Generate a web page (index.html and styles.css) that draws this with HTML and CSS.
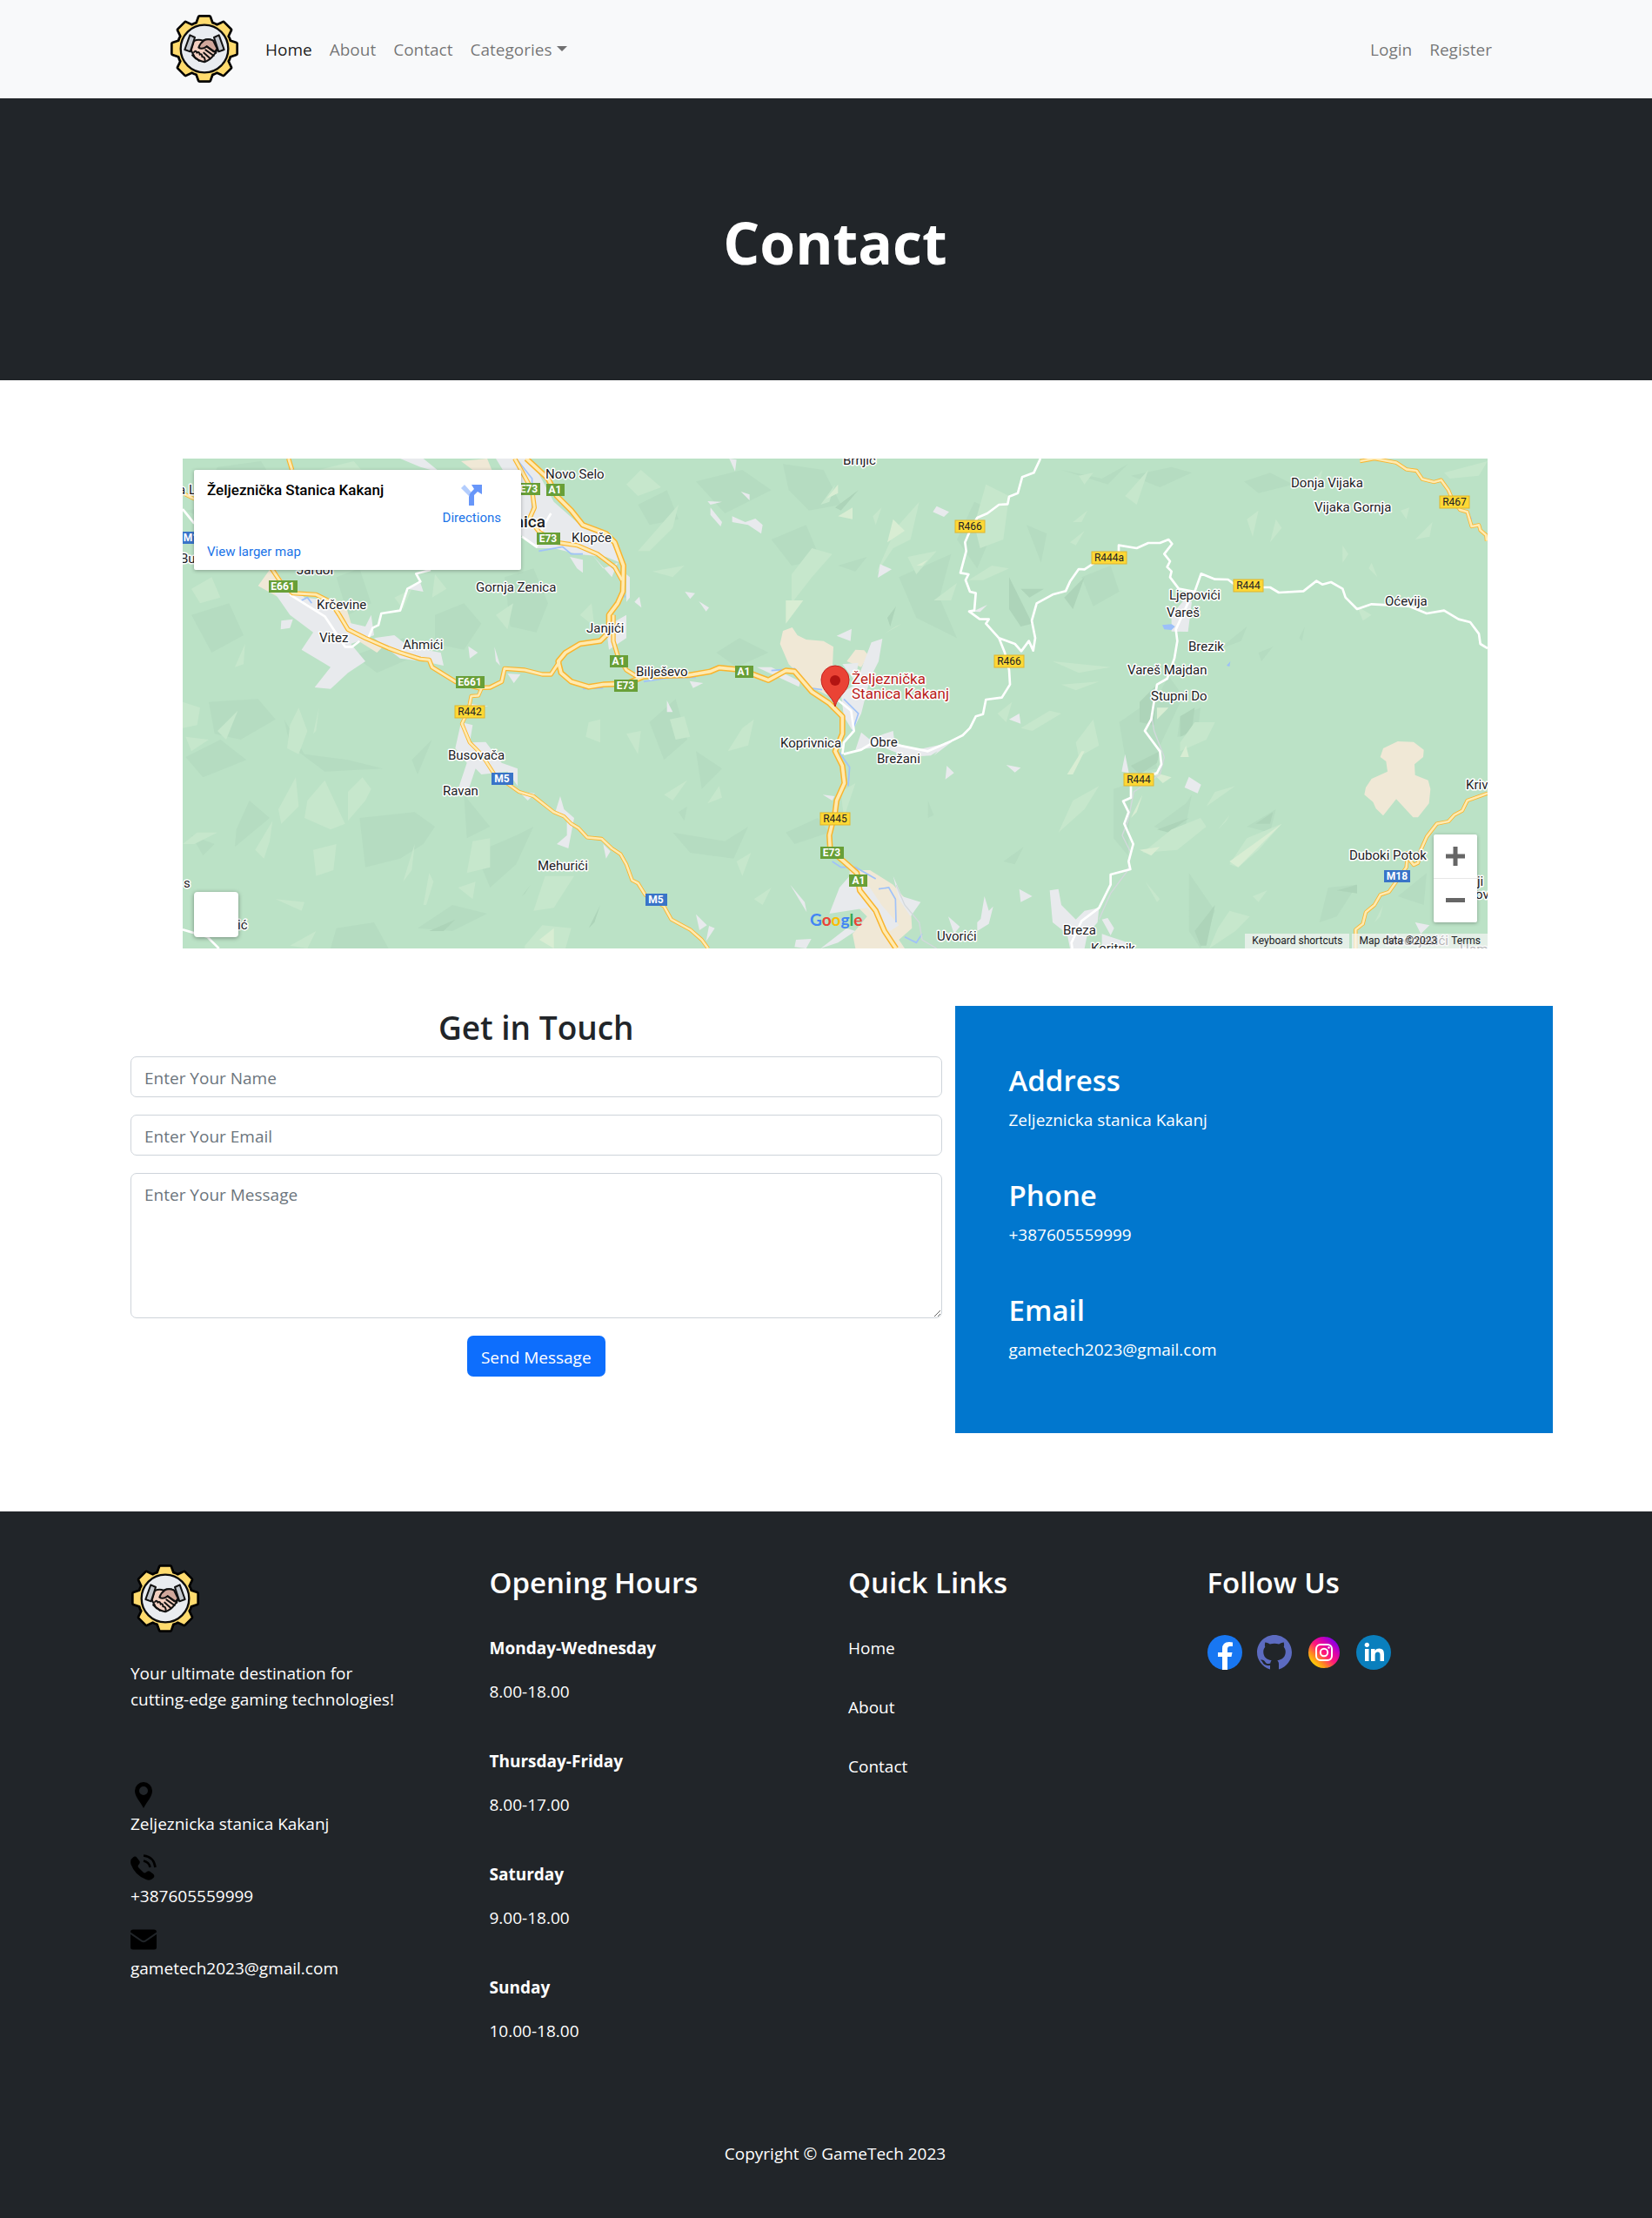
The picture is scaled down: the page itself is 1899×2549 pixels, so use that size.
FILE: index.html
```html
<!DOCTYPE html>
<html lang="en">
<head>
<meta charset="utf-8">
<meta name="viewport" content="width=device-width, initial-scale=1">
<title>GameTech - Contact</title>
<link rel="stylesheet" href="styles.css">
</head>
<body>
<svg class="defs" aria-hidden="true">
  <defs>
    <g id="gear-shape">
      <circle r="90"/>
      <path id="teeth" d="M-28-78-17-109H17L28-78ZM-28 78-17 109H17L28 78ZM-78-28-109-17V17L-78 28ZM78-28 109-17V17L78 28Z"/>
      <use href="#teeth" transform="rotate(45)"/>
    </g>
    <symbol id="logo" viewBox="-120 -120 240 240">
      <use href="#gear-shape" fill="#000" stroke="#000" stroke-width="16" stroke-linejoin="round"/>
      <use href="#gear-shape" fill="#ffdb6e"/>
      <circle r="82" fill="#e9ecf0" stroke="#0b0b0b" stroke-width="7"/>
      <g stroke="#111" stroke-width="6" stroke-linejoin="round" stroke-linecap="round">
        <path d="M-36-27Q-20-34-6-28Q12-36 30-28L44 2Q40 14 32 22Q20 38 0 46Q-24 40-34 28L-46 6Z" fill="#f3cfc0"/>
        <path d="M-2-28Q12-36 30-28L44 0Q38 10 32 10L8-8Q-8 4-20-4Q-14-20-2-28Z" fill="#d0a79b"/>
        <path d="M8-8 40 14M4 4 32 24M-2 14 20 34M-36 12Q-30 4-26 14Q-18 8-16 20Q-8 16-8 28Q2 26 2 44M-42 22-30 34M-28 34-18 42" fill="none"/>
        <path d="M-50-47-33-39-49 10-68 3Z" fill="#c3c7cd"/>
        <path d="M50-47 33-39 49 10 68 3Z" fill="#c3c7cd"/>
      </g>
    </symbol>
  </defs>
</svg>

<nav class="navbar">
  <div class="container navbar-inner">
    <a class="brand" href="#" aria-label="GameTech"><svg class="logo"><use href="#logo"/></svg></a>
    <ul class="nav-list">
      <li><a class="nav-link active" href="#">Home</a></li>
      <li><a class="nav-link" href="#">About</a></li>
      <li><a class="nav-link" href="#">Contact</a></li>
      <li><a class="nav-link dropdown" href="#">Categories</a></li>
    </ul>
    <ul class="nav-list nav-end">
      <li><a class="nav-link" href="#">Login</a></li>
      <li><a class="nav-link" href="#">Register</a></li>
    </ul>
  </div>
</nav>

<header class="hero"><h1>Contact</h1></header>

<main class="main">
  <div class="container">
    <div class="map">
      <svg class="map-canvas" viewBox="210 527 1500 563" preserveAspectRatio="xMidYMid slice" role="img" aria-label="Map of Kakanj">
        <rect x="210" y="527" width="1500" height="563" fill="#bbe2c6"/>
        <defs>
          <path id="hw" d="M1215 21 1290 90 1320 150 1370 200 1410 250 1490 280 1520 310 1550 390 1548 480 1530 520 1500 560 1500 620 1470 650 1400 660 1350 690 1325 720 1335 760 1370 790 1430 808 1480 800 1560 797 1620 772 1775 768 1850 755 1880 742 1960 750 2010 770 2050 785 2110 752 2140 755 2200 825 2260 865 2305 910 2305 970 2280 1030 2305 1080 2312 1140 2285 1200 2280 1240 2260 1320 2263 1370 2310 1410 2355 1450 2365 1510 2420 1580 2450 1650 2490 1710"/>
          <path id="hw2" d="M1515 560 1515 650 1530 700 1560 750 1600 775M1175 21 1205 75 1235 130 1243 190 1225 230 1260 275 1320 310 1390 320 1460 350 1520 395 1545 440M395 21 407 60M330 390 370 450 410 485 490 490 540 515 570 560 600 610 660 640 740 675 780 690 850 712 880 715 890 740 930 765 970 790 1050 812 1090 810 1130 790 1140 745 1210 750 1270 765 1300 765 1330 720"/>
          <path id="minor" d="M1060 815 1050 838 1025 840 1015 890 993 935 1020 1000 1060 1040 1105 1110 1190 1170 1240 1185 1310 1240 1345 1255 1370 1280 1395 1295 1425 1327 1475 1332 1510 1365 1540 1385 1560 1420 1580 1475 1600 1485 1625 1525 1690 1565 1715 1610 1780 1645 1820 1680 1842 1710M4090 30 4140 21 4215 35 4250 58 4285 63 4305 92 4345 102 4370 95 4395 130 4410 165 4435 198 4460 205 4475 255 4500 250 4505 268 4525 285 4527 305M4530 1175 4460 1200 4443 1235 4415 1250 4395 1272 4355 1280 4320 1325 4300 1370 4290 1415 4275 1422 4262 1405M4255 1375 4250 1430 4190 1515 4160 1525 4140 1560 4110 1585 4100 1625 4075 1645 4075 1710M30 140 70 160"/>
        </defs>
        <g transform="scale(.33333333)">
         <g transform="translate(600 1560)">
          <g class="shade">
            <path d="M150 50 300 30 350 110 240 150 120 110ZM40 200 240 170 310 230 180 260ZM900 560 1000 520 1060 590 1000 680 900 660ZM1140 430 1240 400 1290 520 1250 620 1160 600ZM560 430 640 400 680 520 600 560ZM800 140 960 60 1010 150 900 230ZM60 560 190 520 240 630 130 690ZM620 700 790 640 860 690 700 760Z"/>
            <path d="M120 860 290 850 350 920 230 990 140 970ZM380 920 450 1040 600 1060 720 1090 520 1100 400 1010ZM40 1050 160 990 250 1060 100 1120ZM260 1200 330 1260 210 1360 215 1300ZM640 1260 830 1240 900 1290 860 1350 780 1400 660 1430ZM820 1060 890 990 840 1110ZM1000 1180 1090 1290 1010 1330ZM1040 1380 1180 1320 1240 1290 1180 1420 1090 1500ZM560 1640 690 1620 740 1710 540 1710ZM840 1640 960 1560 1080 1590 960 1650ZM60 1320 140 1350 100 1390Z"/>
            <path d="M1600 180 1700 130 1740 230 1640 250ZM1800 100 1960 60 2060 130 1900 210ZM2100 40 2240 60 2300 180 2190 200 2120 130ZM2060 300 2180 250 2230 370 2130 390ZM2290 390 2390 360 2350 410ZM1870 690 1950 640 2050 690 1940 740ZM2500 430 2680 350 2640 500 2700 640 2560 570ZM2700 300 2760 170 2850 210 2770 400ZM1640 930 1730 850 1770 990 1690 1060ZM1800 1030 1890 1090 1820 1160ZM1720 1310 1900 1340 1980 1290 1930 1400 1780 1380ZM2110 1310 2220 1260 2260 1310 2140 1350ZM1740 1240 1770 1220 1760 1270ZM2600 1200 2620 1250 2600 1260ZM2860 1410 2930 1360 2900 1420Z"/>
            <path d="M3060 60 3200 90 3290 40 3220 110ZM3300 80 3440 50 3510 70 3400 120ZM3690 100 3780 70 3860 110 3740 140ZM3130 430 3230 390 3260 480 3170 530ZM3430 770 3480 840 3410 990 3360 1100 3330 960ZM3470 910 3540 880 3530 970 3460 980ZM3260 930 3360 860 3390 1090 3290 1110ZM3240 1160 3300 1140 3290 1390 3240 1330ZM3380 1290 3490 1210 3510 1180 3480 1330ZM3500 1450 3590 1580 3540 1710 3500 1650ZM3700 1290 3800 1230 3780 1310ZM3980 1500 4080 1490 4010 1600 3950 1620ZM4220 1530 4320 1450 4310 1560ZM3880 640 3900 600 3890 650ZM2940 250 3010 280 2990 380ZM3600 680 3700 600 3680 650ZM3740 690 3790 670 3750 720Z"/>
          </g>
          <g class="deep">
            <path d="M2880 430 2960 590 2920 600 2880 540ZM2920 470 3000 470 2950 500ZM2280 190 2360 130 2300 200ZM3070 500 3140 430 3100 540ZM3330 860 3390 800 3380 940 3330 930ZM3470 910 3520 880 3510 960 3470 980ZM3300 1080 3400 1030 3390 1070 3330 1110ZM3390 1300 3500 1260 3430 1310ZM3540 1700 3520 1650 3590 1560 3560 1700ZM880 1650 970 1610 930 1650ZM1200 1530 1230 1490 1210 1520ZM1430 1640 1470 1560 1450 1620ZM3730 1280 3790 1240 3780 1280ZM4010 1510 4080 1490 4080 1520ZM2460 570 2490 530 2470 600Z"/>
          </g>
          <g class="light">
            <path d="M110 120 210 60 250 80 160 160ZM60 470 130 430 160 500 90 520ZM210 740 245 660 240 730ZM500 60 620 30 680 100 560 120ZM1110 560 1170 520 1150 610ZM900 420 940 470 890 500ZM1400 560 1440 520 1450 600ZM760 500 820 470 790 540ZM30 860 90 880 80 940 30 950ZM40 980 120 990 60 1030ZM150 960 220 890 180 990ZM400 940 430 880 460 960 430 1040 390 1020ZM480 970 500 880 490 960ZM360 1230 420 1120 430 1220 370 1280ZM460 1200 520 1130 590 1280 540 1300 450 1260ZM600 1170 650 1120 680 1160 660 1200 600 1270ZM30 1350 80 1310 150 1310 70 1350ZM280 1370 340 1270 330 1340 310 1400ZM480 1370 560 1350 550 1440 490 1460ZM790 1480 830 1350 820 1440ZM860 1560 880 1450 895 1480 870 1560ZM1010 1450 1030 1340 1090 1330 1090 1430ZM1240 1580 1280 1460 1380 1460 1310 1570ZM1210 1700 1270 1630 1370 1640 1350 1710 1210 1710ZM350 1540 450 1550 440 1580ZM400 1700 490 1650 460 1710ZM980 1500 1040 1480 1030 1540ZM1430 930 1470 920 1470 1000 1420 980Z"/>
            <path d="M1560 110 1610 60 1680 120 1600 150ZM1600 340 1740 180 1720 260 1640 340ZM1650 410 1760 390 1720 430ZM2130 420 2200 330 2270 350 2200 430 2130 520ZM2230 180 2280 110 2260 170ZM2410 220 2440 190 2420 250ZM2420 420 2490 260 2570 170 2540 300 2480 330ZM2530 360 2630 340 2560 420ZM2620 510 2700 450 2680 510ZM2740 440 2820 390 2880 400 2790 440ZM2760 250 2800 110 2880 150 2860 300 2780 330ZM1710 920 1760 910 1780 980 1730 990ZM1560 970 1610 960 1600 1040ZM1910 1030 1960 950 2000 920 1980 1010ZM1690 1180 1770 1130 1720 1200ZM1840 1210 1880 1150 1890 1190ZM1940 1410 1990 1380 1960 1460ZM2000 1540 2060 1500 2030 1560ZM2840 900 2890 860 2870 930ZM2920 950 3020 890 3060 900 2960 960ZM2300 1170 2350 1140 2310 1260Z"/>
            <path d="M3120 80 3170 70 3140 110ZM3280 150 3360 60 3320 180ZM3100 240 3150 200 3130 240ZM3090 310 3140 270 3110 320ZM3030 720 3230 740 3120 760ZM3060 800 3190 790 3110 820ZM3110 1000 3170 920 3190 1010 3120 1050ZM3050 1310 3100 1200 3190 1150 3140 1230ZM3470 1000 3520 930 3590 930 3560 990 3470 1030ZM3340 1380 3440 1300 3540 1260 3560 1290 3460 1370ZM3640 1420 3700 1330 3820 1280 3740 1370 3670 1430ZM3560 1220 3590 1170 3660 1150ZM3600 1300 3640 1250 3630 1270ZM3600 1640 3640 1580 3710 1600 3660 1650 3570 1710ZM3350 1480 3400 1540 3390 1550ZM3780 310 3800 230 3820 260ZM3700 230 3740 200 3720 290ZM4030 320 4050 350 4030 380ZM4130 380 4150 430 4120 400ZM4280 300 4340 240 4330 290ZM4230 200 4260 190 4250 230ZM3920 110 3960 60 3950 110ZM4380 70 4530 30 4500 80 4400 90ZM4080 530 4130 560 4100 580ZM4140 1620 4170 1560 4160 1600ZM3720 1530 3770 1510 3740 1550Z"/>
          </g>
          <g class="pale">
            <path d="M2250 160 2290 110 2290 140ZM2290 220 2340 190 2340 230ZM2460 310 2480 230 2520 270ZM2110 510 2170 510 2110 590ZM2440 630 2510 590 2490 600ZM2560 390 2600 370 2580 390ZM3300 1260 3340 1180 3320 1240ZM3470 1050 3490 1010 3500 1050ZM3640 1410 3820 1280 3670 1430ZM3370 1100 3440 1120 3410 1140ZM3330 1370 3400 1360 3370 1390ZM3390 880 3430 880 3390 920ZM3080 1110 3130 1030 3140 1030 3100 1110ZM1260 1680 1310 1640 1310 1710Z"/>
          </g>
          <g class="sand">
            <path d="M290 460 340 390 400 480 490 580 520 630 450 590 380 510ZM490 490 590 520 620 620 720 670 700 690 620 640ZM990 30 1080 21 1100 70 1030 60ZM1240 130 1290 200 1390 250 1330 280 1240 210ZM2090 660 2100 615 2132 603 2150 630 2180 645 2240 650 2274 670 2270 760 2260 840 2200 810 2120 730ZM2320 720 2350 680 2380 682 2395 700 2370 740ZM2330 1440 2400 1440 2480 1490 2540 1560 2545 1640 2500 1680 2520 1710 2350 1710 2340 1660 2390 1600 2330 1540ZM4160 1050 4170 1020 4220 996 4275 998 4310 1025 4308 1050 4278 1075 4280 1112 4325 1130 4333 1160 4328 1210 4290 1258 4273 1258 4215 1195 4170 1252 4145 1228 4135 1205 4105 1180 4110 1155 4130 1125 4185 1100 4180 1065Z"/>
          </g>
          <g class="town">
            <path d="M780 21 860 21 920 70 850 50ZM1110 21 1230 21 1310 170 1400 250 1500 290 1540 380 1490 360 1390 350 1310 330 1250 330 1190 280 1170 120ZM330 460 400 450 450 500 540 510 570 580 660 600 680 560 690 630 610 660 660 720 600 760 540 815 485 810 540 740 440 680 480 620 400 560ZM690 640 760 630 810 670 920 690 930 735 860 720 780 710ZM370 580 410 575 400 605 368 610ZM1015 668 1048 690 1020 710ZM1105 670 1125 735 1110 720ZM805 470 850 450 860 480ZM1150 762 1195 765 1172 795ZM1365 360 1410 370 1410 415 1390 400ZM1440 350 1480 400 1530 380 1510 430ZM1490 600 1560 560 1560 640 1500 680Z"/>
            <path d="M990 930 1030 940 1020 1000 1075 998 1130 1070 1185 1090 1185 1150 1150 1100 1060 1110 1040 1090 1010 1180 980 1160 1010 1070 970 1020ZM1190 1170 1245 1175 1220 1200ZM1332 1185 1345 1230 1380 1260 1360 1365 1320 1350 1355 1320 1355 1270 1315 1240ZM1480 1350 1505 1375 1490 1400ZM1010 865 1085 875 1040 880Z"/>
            <path d="M1915 21 1940 25 1935 65ZM1955 135 1985 145 1985 165ZM1840 168 1890 170 1850 180ZM1850 190 1890 240 1885 255 1850 215ZM1925 220 1970 240 2005 228 2030 250 2025 280 1980 250 1925 240ZM1560 420 1572 430 1572 500 1560 515ZM1588 515 1605 497 1612 535ZM1762 480 1797 485 1780 505ZM1810 513 1845 535 1835 548ZM2435 385 2475 403 2427 432ZM2617 205 2630 185 2673 205 2655 222ZM2285 632 2337 608 2333 650ZM2405 655 2443 642 2430 720 2400 780 2370 900 2340 960 2310 910 2300 830 2350 800ZM2010 740 2060 740 2160 790 2155 808ZM1778 788 1825 795 1790 812ZM2305 730 2360 725 2350 790ZM2755 548 2805 525 2780 550Z"/>
            <path d="M1700 855 1720 895 1700 895ZM2350 1025 2370 965 2400 990 2450 970 2480 960 2485 1000 2560 1025 2680 1000 2610 1045 2530 1050 2440 1015ZM2660 1000 2680 1000 2620 1045ZM2880 920 2915 900 2920 935ZM2665 1080 2690 1105 2660 1127ZM2870 1077 2920 1087 2900 1103ZM2237 1180 2278 1185 2270 1200ZM2125 1490 2175 1550 2182 1585ZM1800 1592 1838 1630 1812 1647ZM1845 1632 1865 1640 1835 1685ZM2295 1500 2330 1460 2400 1500 2440 1560 2500 1630 2470 1650 2390 1570 2260 1590ZM2480 1460 2510 1530 2575 1550 2540 1600 2500 1540ZM2145 1680 2198 1677 2180 1710 2140 1705ZM2230 1710 2320 1640 2350 1650 2290 1690ZM2915 1505 2960 1530 2920 1550ZM2795 1530 2810 1580 2780 1620ZM2670 1600 2710 1635 2690 1660ZM2770 1620 2825 1565 2810 1625 2770 1650ZM3020 1510 3050 1505 3060 1560 3110 1610 3140 1580 3190 1570 3185 1620 3150 1660 3140 1710 3090 1710 3080 1660 3030 1620Z"/>
            <path d="M3440 560 3490 500 3510 515 3497 618 3440 617ZM3280 1040 3293 1105 3268 1100ZM3485 1155 3500 1118 3542 1145 3530 1175ZM3200 1610 3220 1605 3242 1640 3230 1665ZM3200 1660 3290 1690 3260 1710 3200 1710ZM4280 1620 4330 1630 4300 1660Z"/>
          </g>
          <g class="water">
            <path d="M1225 230 1235 190 1235 90 1180 21M440 510 460 500 475 520M1258 340 1340 325 1370 350 1410 350M1470 360 1540 420 1555 500M1410 815 1480 812M1620 790 1700 778 1800 775M2060 752 2140 745 2180 810 2235 818M2310 850 2360 900 2340 960M2295 1035 2330 1085 2325 1150M2270 1410 2300 1430 2350 1430 2420 1470M2430 1505 2465 1500 2488 1540 2490 1620M2520 1670 2560 1690 2580 1660M4460 210 4475 230"/>
            <path class="fill" d="M3408 595 3440 592 3452 600 3440 612 3415 610ZM3630 735 3643 720 3640 738Z"/>
          </g>
          <path class="track" d="M2490 1490 2520 1560 2570 1620 2580 1680 2630 1710M3370 900 3380 960 3415 1050 3400 1110 3310 1170 3290 1270 3270 1320 3300 1380 3290 1440 3230 1520 3190 1610"/>
          <g class="white-road">
            <path d="M30 195 70 245M885 405 835 418 850 445 805 470 780 545 715 555 705 595 685 605 670 640M400 490 520 565 590 670 615 670 640 650M30 1645 115 1670 155 1710M1200 290 1250 325 1270 260 1300 210"/>
            <path d="M2988 21 2965 70 2925 85 2910 140 2880 152 2875 178 2845 180 2805 210 2770 225 2745 270 2728 310 2732 340 2712 415 2740 420 2730 440 2745 480 2765 485 2760 545 2742 548 2778 574 2810 575 2800 590 2845 640 2865 690 2880 750 2883 800 2855 845 2800 852 2790 902 2765 910 2745 950 2720 975 2680 995 2600 1030 2500 1010 2410 1000 2370 1025 2310 1040M2285 850 2335 890 2345 960 2310 1000 2305 1040M2845 640 2900 660 2922 685 2948 650 2963 683 2970 640 2958 580 2975 520 3030 490 3075 478 3090 445 3120 402 3140 403 3175 380 3258 350 3258 320 3320 330 3360 312 3400 312 3430 300 3442 315 3415 350 3435 375 3425 395 3440 410 3435 430 3465 470 3520 480 3542 418 3590 437 3635 438 3670 465 3780 465 3810 483 3895 478 3940 443 3960 455 3990 447 4030 470 4040 500 4080 540 4130 523 4260 530 4320 555 4380 545 4430 575 4470 585 4500 625 4505 660 4530 675"/>
            <path d="M3510 490 3455 610 3460 650 3450 710 3425 780 3390 800 3378 870 3370 920 3348 960 3400 1030 3405 1075 3390 1105 3300 1140 3300 1190 3273 1202 3292 1240 3277 1280 3308 1350 3292 1410 3298 1437 3230 1455 3230 1490 3190 1570 3130 1615 3095 1690 3098 1710"/>
          </g>
          <g class="road-edge"><use href="#hw"/><use class="mid" href="#hw2"/><use class="thin" href="#minor"/></g>
          <g class="road-core"><use href="#hw"/><use class="mid" href="#hw2"/><use class="thin" href="#minor"/></g>
         </g>
        </g>
        <g class="place">
          <text x="205" y="568">a Luka</text><text x="207" y="647">Buk</text><text x="341" y="660">Jardol</text>
          <text x="627" y="550">Novo Selo</text><text x="657" y="623">Klopče</text><text x="547" y="680">Gornja Zenica</text>
          <text x="364" y="700">Krčevine</text><text x="367" y="738">Vitez</text><text x="463" y="746">Ahmići</text><text x="674" y="727">Janjići</text>
          <text x="515" y="873">Busovača</text><text x="509" y="914">Ravan</text><text x="618" y="1000">Mehurići</text>
          <text x="211" y="1020">s</text><text x="273" y="1068">ić</text>
          <text x="969" y="534">Brnjić</text><text x="731" y="777">Bilješevo</text>
          <text x="897" y="859">Koprivnica</text><text x="1000" y="858">Obre</text><text x="1008" y="877">Brežani</text><text x="1077" y="1081">Uvorići</text>
          <text x="1484" y="560">Donja Vijaka</text><text x="1511" y="588">Vijaka Gornja</text><text x="1344" y="689">Ljepovići</text><text x="1341" y="709">Vareš</text>
          <text x="1592" y="696">Oćevija</text><text x="1366" y="748">Brezik</text><text x="1296" y="775">Vareš Majdan</text><text x="1323" y="805">Stupni Do</text>
          <text x="1685" y="907">Kriv</text><text x="1551" y="988">Duboki Potok</text><text x="1698" y="1018">ji</text><text x="1696" y="1033">ov</text>
          <text x="1222" y="1074">Breza</text><text x="1254" y="1095">Koritnik</text><text x="1593" y="1086">Medojevići</text><text x="1678" y="1096">Home</text>
          <text class="city" x="627" y="606">Zenica</text>
        </g>
        <g class="shield green">
          <rect x="309" y="667" width="33" height="14"/><text x="325" y="678">E661</text>
          <rect x="524" y="777" width="33" height="14"/><text x="540" y="788">E661</text>
          <rect x="594" y="555" width="27" height="14"/><text x="608" y="566">E73</text>
          <rect x="628" y="556" width="21" height="14"/><text x="638" y="567">A1</text>
          <rect x="617" y="612" width="27" height="14"/><text x="630" y="623">E73</text>
          <rect x="701" y="753" width="21" height="14"/><text x="711" y="764">A1</text>
          <rect x="706" y="781" width="27" height="14"/><text x="719" y="792">E73</text>
          <rect x="845" y="765" width="21" height="14"/><text x="855" y="776">A1</text>
          <rect x="943" y="973" width="27" height="14"/><text x="956" y="984">E73</text>
          <rect x="976" y="1005" width="21" height="14"/><text x="987" y="1016">A1</text>
        </g>
        <g class="shield blue">
          <rect x="204" y="611" width="30" height="14"/><text x="223" y="622">M18</text>
          <rect x="565" y="888" width="25" height="14"/><text x="577" y="899">M5</text>
          <rect x="742" y="1027" width="25" height="14"/><text x="754" y="1038">M5</text>
          <rect x="1591" y="1000" width="30" height="14"/><text x="1606" y="1011">M18</text>
        </g>
        <g class="shield yellow">
          <rect x="523" y="811" width="34" height="14"/><text x="540" y="822">R442</text>
          <rect x="1098" y="598" width="34" height="14"/><text x="1115" y="609">R466</text>
          <rect x="1143" y="753" width="34" height="14"/><text x="1160" y="764">R466</text>
          <rect x="1655" y="570" width="34" height="14"/><text x="1672" y="581">R467</text>
          <rect x="1255" y="634" width="40" height="14"/><text x="1275" y="645">R444a</text>
          <rect x="1418" y="666" width="34" height="14"/><text x="1435" y="677">R444</text>
          <rect x="943" y="934" width="34" height="14"/><text x="960" y="945">R445</text>
          <rect x="1292" y="889" width="34" height="14"/><text x="1309" y="900">R444</text>
        </g>
        <g class="pin">
          <path d="M960 812C957 799 944 795 944 781A16 16 0 0 1 976 781C976 795 963 799 960 812Z"/>
          <circle cx="960" cy="782" r="6"/>
          <text x="979" y="786">Željeznička</text><text x="979" y="803">Stanica Kakanj</text>
        </g>
        <text class="google" x="931" y="1064"><tspan fill="#4285f4">G</tspan><tspan fill="#ea4335">o</tspan><tspan fill="#fbbc04">o</tspan><tspan fill="#4285f4">g</tspan><tspan fill="#34a853">l</tspan><tspan fill="#ea4335">e</tspan></text>
      </svg>
      <div class="map-card">
        <div class="map-card-text">
          <strong>Željeznička Stanica Kakanj</strong>
          <a href="#">View larger map</a>
        </div>
        <a class="directions" href="#">
          <svg viewBox="0 0 24 24" width="24" height="24"><path d="M0 4 4 0 12 9 9 13Z" fill="#b3cdfd"/><path d="M9 24V14Q9 11 12 8L15 5 12 0H24V11L19 8 15 12V24Z" fill="#6796f9"/></svg>
          Directions
        </a>
      </div>
      <button class="map-layer" type="button" aria-label="Satellite view"></button>
      <div class="map-zoom">
        <button type="button" aria-label="Zoom in"><svg viewBox="0 0 22 22" width="22" height="22"><path d="M8.500 0h5v8.500H22v5h-8.500V22h-5v-8.500H0v-5h8.500Z" fill="#666"/></svg></button>
        <button type="button" aria-label="Zoom out"><svg viewBox="0 0 22 22" width="22" height="22"><path d="M0 8h22v5H0Z" fill="#666"/></svg></button>
      </div>
      <div class="map-legal">
        <button type="button">Keyboard shortcuts</button>
        <span>Map data ©2023</span>
        <a href="#">Terms</a>
      </div>
    </div>

    <div class="contact-row">
      <form class="contact-form">
        <h2>Get in Touch</h2>
        <input type="text" placeholder="Enter Your Name" aria-label="Name">
        <input type="email" placeholder="Enter Your Email" aria-label="Email">
        <textarea placeholder="Enter Your Message" aria-label="Message"></textarea>
        <button class="send" type="submit">Send Message</button>
      </form>
      <section class="info">
        <div><h3>Address</h3><p>Zeljeznicka stanica Kakanj</p></div>
        <div><h3>Phone</h3><p>+387605559999</p></div>
        <div><h3>Email</h3><p>gametech2023@gmail.com</p></div>
      </section>
    </div>
  </div>
</main>

<footer class="footer">
  <div class="container">
    <div class="footer-grid">
      <div>
        <svg class="logo"><use href="#logo"/></svg>
        <p class="tagline">Your ultimate destination for <span class="keep">cutting-edge</span> gaming technologies!</p>
        <address class="contact-list">
          <div><svg viewBox="0 0 30 30" width="30" height="30"><path fill-rule="evenodd" d="M15 0A10 10 0 0 0 5 10C5 17 11 22 15 30 19 22 25 17 25 10A10 10 0 0 0 15 0ZM15 5A5 5 0 1 1 15 15 5 5 0 0 1 15 5Z"/></svg><span>Zeljeznicka stanica Kakanj</span></div>
          <div><svg viewBox="0 0 30 30" width="30" height="30"><path d="M3 3.500Q5.500 1.500 7.500 4L10.500 8Q11.500 10 9 12.500 8 14 9.500 15.500L14.500 20.500Q16 22 17.500 21 20 18.500 22 19.500L26 22.500Q28.500 24.500 26.500 27 23 31 18 29 5 24 .500 11.500-1 6 3 3.500Z"/><path d="M15 1.500Q27 3 28.500 15M15 7.500Q21.500 9 22.500 15" fill="none" stroke="#000" stroke-width="2.600"/></svg><span>+387605559999</span></div>
          <div><svg viewBox="0 0 30 30" width="30" height="30"><path d="M3 3.500H27Q30 3.500 30 6.500L17 15.500Q15 17 13 15.500L0 6.500Q0 3.500 3 3.500ZM0 9 12.500 17.500Q15 19 17.500 17.500L30 9V24Q30 26.500 27 26.500H3Q0 26.500 0 24Z"/></svg><span>gametech2023@gmail.com</span></div>
        </address>
      </div>
      <div>
        <h3>Opening Hours</h3>
        <dl class="hours">
          <div><dt>Monday-Wednesday</dt><dd>8.00-18.00</dd></div>
          <div><dt>Thursday-Friday</dt><dd>8.00-17.00</dd></div>
          <div><dt>Saturday</dt><dd>9.00-18.00</dd></div>
          <div><dt>Sunday</dt><dd>10.00-18.00</dd></div>
        </dl>
      </div>
      <div>
        <h3>Quick Links</h3>
        <ul class="links">
          <li><a href="#">Home</a></li>
          <li><a href="#">About</a></li>
          <li><a href="#">Contact</a></li>
        </ul>
      </div>
      <div>
        <h3>Follow Us</h3>
        <div class="social">
          <a href="#" aria-label="Facebook"><svg viewBox="0 0 40 40" width="40" height="40"><circle cx="20" cy="20" r="20" fill="#1877f2"/><path d="M17 40V25H12V20H17V16Q17 8 25 8 27 8 29 8.500V13H26Q23 13 23 16V20H28.500L27.500 25H23V40Z" fill="#fff"/></svg></a>
          <a href="#" aria-label="GitHub"><svg viewBox="0 0 16 16" width="40" height="40"><path fill="#5c6bc0" d="M8 0C3.580 0 0 3.580 0 8c0 3.400 2.300 6.600 6 7.800V14C4 14.300 3 13.500 2.600 12.600 2.300 12 1.900 11.700 1.600 11.500 2.600 11.200 3.300 11.700 3.800 12.500 4.400 13.400 5.300 13.300 6.100 13 6.200 12.400 6.400 12 6.700 11.700 4.300 11.300 2.900 10 2.900 7.700 2.900 6.800 3.200 6.100 3.700 5.500 3.500 4.800 3.500 4.100 3.700 3.400 4.600 3.400 5.300 3.800 5.900 4.200A7.600 7.600 0 0 1 10.100 4.200C10.700 3.800 11.400 3.400 12.300 3.400 12.500 4.100 12.500 4.800 12.300 5.500 12.800 6.100 13.100 6.800 13.100 7.700 13.100 10 11.700 11.300 9.300 11.700 9.700 12 10 12.600 10 13.400V15.800C13.700 14.600 16 11.400 16 8c0-4.420-3.580-8-8-8Z"/></svg></a>
          <a href="#" aria-label="Instagram"><svg viewBox="0 0 40 40" width="40" height="40"><defs><linearGradient id="ig" x1="0.100" y1="0.900" x2="0.850" y2="0.100"><stop offset="0" stop-color="#ffe600"/><stop offset=".25" stop-color="#ff8a20"/><stop offset=".5" stop-color="#ff1a78"/><stop offset=".75" stop-color="#d500b0"/><stop offset="1" stop-color="#7a00f0"/></linearGradient></defs><circle cx="20" cy="20" r="18" fill="url(#ig)"/><g fill="none" stroke="#fff" stroke-width="2"><rect x="11" y="11" width="18" height="18" rx="5"/><circle cx="20" cy="20" r="4.200"/></g><circle cx="25.500" cy="14.500" r="1.200" fill="#fff"/></svg></a>
          <a href="#" aria-label="LinkedIn"><svg viewBox="0 0 40 40" width="40" height="40"><circle cx="20" cy="20" r="20" fill="#0a7fbd"/><path d="M10 16H14.500V30H10ZM17 16H21.500V18Q23 15.600 26.500 15.600 32 15.600 32 22V30H27.500V23Q27.500 19.500 24.800 19.500 21.600 19.500 21.600 23V30H17Z" fill="#fff"/><circle cx="12.300" cy="11.300" r="2.600" fill="#fff"/></svg></a>
        </div>
      </div>
    </div>
    <p class="copyright">Copyright © GameTech 2023</p>
  </div>
</footer>
</body>
</html>
```
FILE: styles.css
```css
* { box-sizing: border-box; }
body {
  margin: 0;
  font-family: "Segoe UI", "Open Sans", "Noto Sans", sans-serif;
  font-size: 19px;
  line-height: 30px;
  color: #212529;
  background: #fff;
}
h1, h2, h3, p, ul, dl, dd { margin: 0; padding: 0; }
ul { list-style: none; }
a { color: inherit; text-decoration: none; }
svg { display: block; }
button, input, textarea { font: inherit; }
.defs { position: absolute; width: 0; height: 0; }

/* the page sits half a scrollbar to the right of centre */
.navbar, .hero, .main, .footer { padding-left: 21px; }
.container { max-width: 1650px; margin: 0 auto; padding: 0 15px; }

.navbar { background: #f8f9fa; }
.navbar-inner { display: flex; align-items: center; padding: 16px 60px 17px; }
.brand { margin-right: 20px; }
.logo { width: 80px; height: 80px; }
.nav-list { display: flex; }
.nav-end { margin-left: auto; }
.nav-link { display: block; padding: 12px 10px 10px; color: rgba(0, 0, 0, .55); }
.nav-link.active { color: rgba(0, 0, 0, .9); }
.dropdown::after {
  content: "";
  display: inline-block;
  margin-left: 6px;
  vertical-align: 5px;
  border: 6px solid transparent;
  border-top-color: currentColor;
  border-bottom: 0;
}

.hero { background: #212529; color: #fff; text-align: center; padding-top: 123px; padding-bottom: 117px; }
.hero h1 { font-size: 66px; line-height: 84px; font-weight: 700; }

.main { padding-top: 90px; padding-bottom: 90px; }
.map {
  position: relative;
  overflow: hidden;
  max-width: 1500px;
  margin: 0 auto 66px;
  font-family: Roboto, sans-serif;
}
.map-canvas { width: 100%; height: 563px; }
.shade { fill: #b5dcc1; }
.deep { fill: #add4b9; }
.light { fill: #c6e7cc; }
.pale { fill: #d8edd3; }
.sand { fill: #f0e8d6; }
.town { fill: #e8eaed; }
.water { fill: none; stroke: #a0c2f9; stroke-width: 5; }
.water .fill { fill: #9cc0f9; stroke: none; }
.track { fill: none; stroke: #d3d8dc; stroke-width: 4; }
.white-road { fill: none; stroke: #fff; stroke-width: 8; stroke-linejoin: round; }
.road-edge, .road-core { fill: none; stroke-linejoin: round; }
.road-edge { stroke: #f9b42d; stroke-width: 20; }
.road-core { stroke: #ffeab0; stroke-width: 11; }
.road-edge .mid { stroke-width: 16; }
.road-core .mid { stroke-width: 9; }
.road-edge .thin { stroke-width: 13; }
.road-core .thin { stroke-width: 8; }
.place text { font-size: 15px; fill: #202124; stroke: #fff; stroke-width: 3px; stroke-linejoin: round; paint-order: stroke; }
.place .city { font-size: 19px; font-weight: 500; text-anchor: end; }
.shield text { font-size: 12px; text-anchor: middle; font-weight: 700; fill: #fff; }
.green rect { fill: #689f38; }
.blue rect { fill: #3974c8; }
.yellow rect { fill: #fdd835; stroke: #e0b52e; stroke-width: 1px; }
.shield.yellow text { fill: #202124; font-weight: 400; }
.pin path { fill: #ea4335; stroke: #c5221f; stroke-width: 1px; }
.pin circle { fill: #b31412; }
.pin text { font-size: 17px; fill: #b91c1a; stroke: #fff; stroke-width: 3px; stroke-linejoin: round; paint-order: stroke; }
.google { font-family: Lato, sans-serif; font-size: 19px; font-weight: 700; }

.map-card {
  position: absolute;
  top: 13px;
  left: 13px;
  display: flex;
  justify-content: space-between;
  width: 376px;
  height: 115px;
  padding: 13px 23px 11px 15px;
  background: #fff;
  border-radius: 2px;
  box-shadow: 0 1px 4px rgba(0, 0, 0, .3);
  font-size: 15px;
  line-height: 20px;
}
.map-card-text { display: flex; flex-direction: column; justify-content: space-between; }
.map-card strong { font-size: 17px; font-weight: 500; color: #000; }
.map-card a { color: #1a73e8; }
.directions { display: flex; flex-direction: column; align-items: center; gap: 4px; padding-top: 4px; }
.map-layer {
  position: absolute;
  left: 13px;
  bottom: 13px;
  width: 51px;
  height: 52px;
  border: 0;
  border-radius: 4px;
  background: #fff;
  box-shadow: 0 1px 5px rgba(0, 0, 0, .4);
}
.map-zoom {
  position: absolute;
  right: 12px;
  bottom: 30px;
  width: 50px;
  background: #fff;
  border-radius: 2px;
  box-shadow: 0 1px 4px rgba(0, 0, 0, .3);
}
.map-zoom button { display: flex; align-items: center; justify-content: center; width: 50px; height: 50px; padding: 0; border: 0; background: none; }
.map-zoom button + button { border-top: 1px solid #e6e6e6; height: 51px; }
.map-legal { position: absolute; right: 0; bottom: 0; display: flex; gap: 3px; font-size: 12px; line-height: 17px; color: #202124; }
.map-legal > * { padding: 0 8px; border: 0; background: rgba(245, 245, 245, .7); color: inherit; }
.map-legal span { margin-right: -3px; }

.contact-row { display: grid; grid-template-columns: 7fr 5fr; margin: 0 -15px; }
.contact-form { display: flex; flex-direction: column; align-items: center; gap: 20px; padding: 0 15px; }
.contact-form h2 { font-size: 37px; line-height: 50px; font-weight: 600; margin-bottom: -12px; }
.contact-form input, .contact-form textarea {
  display: block;
  width: 100%;
  height: 47px;
  padding: 9px 15px 7px;
  border: 1px solid #ced4da;
  border-radius: 7px;
  background: #fff;
  color: #212529;
}
.contact-form textarea { height: 167px; resize: vertical; }
.contact-form ::placeholder { color: #6c757d; opacity: 1; }
.send { height: 47px; padding: 2px 16px 0; border: 0; border-radius: 7px; background: #0d6efd; color: #fff; }
.info { display: flex; flex-direction: column; gap: 50px; padding: 64px 62px 81px; background: #0177ce; color: #fff; }
h3 { font-size: 33px; line-height: 44px; font-weight: 600; margin-bottom: 8px; }

.footer { background: #212529; color: #fff; padding-top: 60px; padding-bottom: 59px; }
.footer-grid { display: grid; grid-template-columns: repeat(4, 1fr); column-gap: 30px; }
.footer h3 { margin-bottom: 38px; }
.tagline { margin: 31px 0 80px; max-width: 340px; }
.keep { white-space: nowrap; }
.contact-list { display: grid; gap: 20px; font-style: normal; }
.contact-list div { display: grid; gap: 3px; }
.hours { display: grid; gap: 50px; }
.hours dt { font-weight: 700; margin-bottom: 20px; }
.links { display: grid; gap: 38px; }
.social { display: flex; gap: 17px; }
.copyright { margin-top: 111px; text-align: center; }
```
